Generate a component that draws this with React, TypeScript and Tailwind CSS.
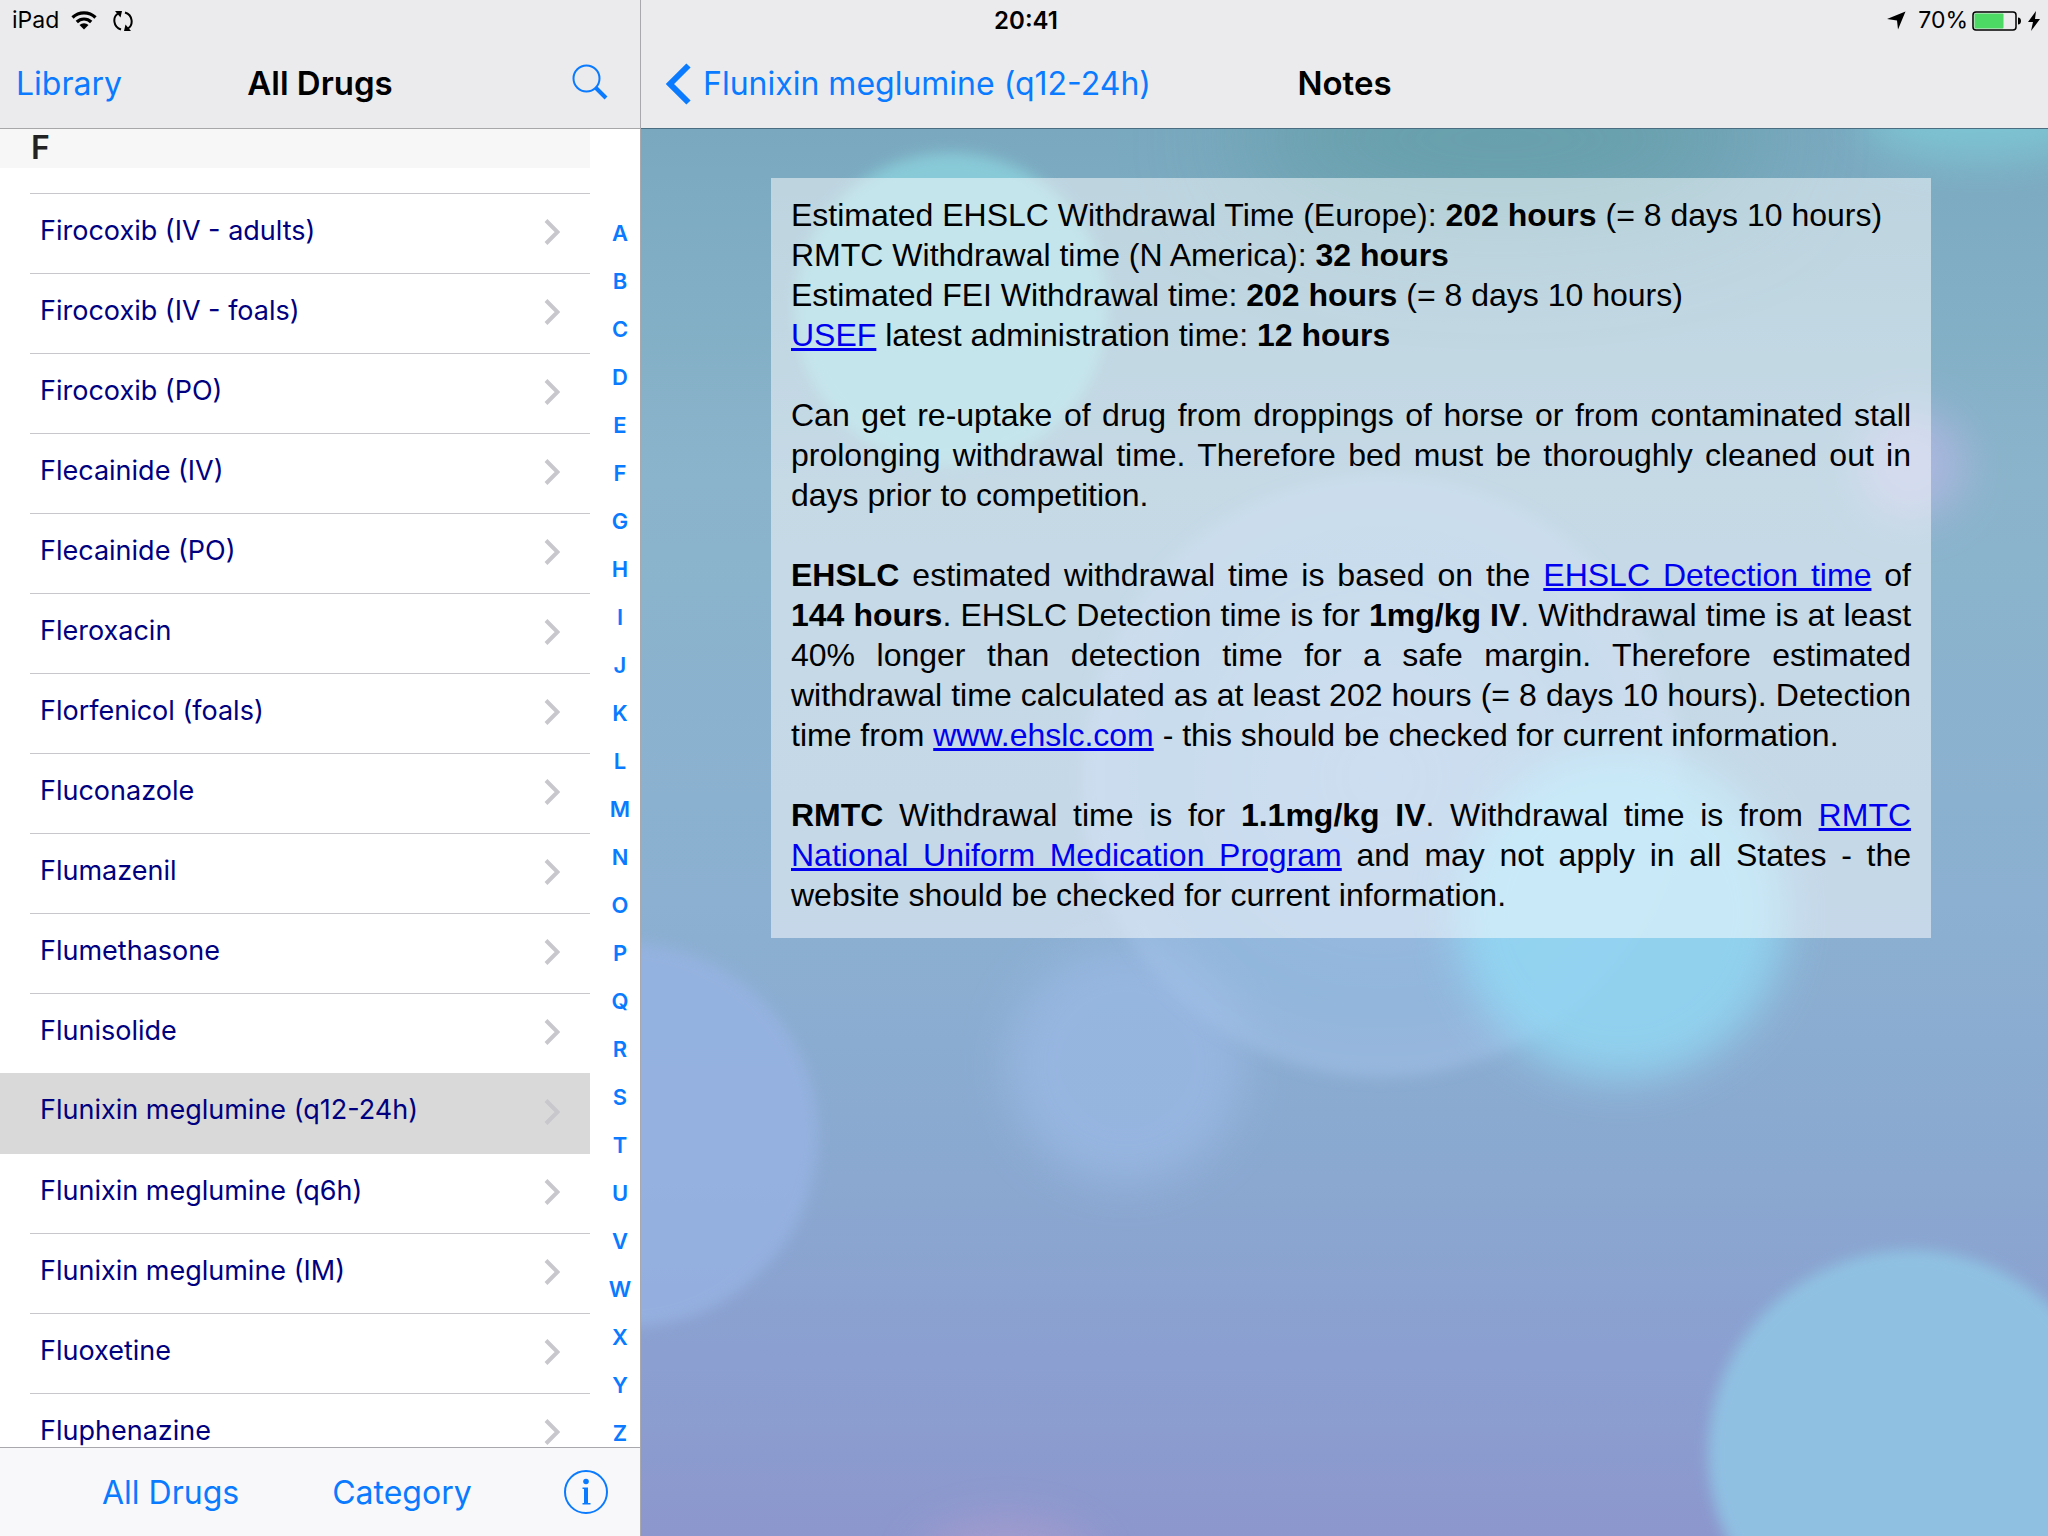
import React, { FC, ReactNode } from 'react';

const drugs = [
  'Firocoxib (IV - adults)',
  'Firocoxib (IV - foals)',
  'Firocoxib (PO)',
  'Flecainide (IV)',
  'Flecainide (PO)',
  'Fleroxacin',
  'Florfenicol (foals)',
  'Fluconazole',
  'Flumazenil',
  'Flumethasone',
  'Flunisolide',
  'Flunixin meglumine (q12-24h)',
  'Flunixin meglumine (q6h)',
  'Flunixin meglumine (IM)',
  'Fluoxetine',
  'Fluphenazine',
];

const selectedDrug = 'Flunixin meglumine (q12-24h)';
const letters = 'ABCDEFGHIJKLMNOPQRSTUVWXYZ'.split('');

const WifiIcon = () => (
  <svg width="26" height="20" viewBox="0 0 26 20" fill="none" stroke="#000" strokeWidth="3.200">
    <path d="M1.500 6.500a16.500 16.500 0 0 1 23 0" />
    <path d="M5.800 11a10.200 10.200 0 0 1 14.400 0" />
    <path d="M13 18.500l-4.500-4.500a6.500 6.500 0 0 1 9 0z" fill="#000" stroke="none" />
  </svg>
);

const SyncIcon = () => (
  <svg width="20" height="22" viewBox="0 0 20 22" fill="none" stroke="#000" strokeWidth="2">
    <path d="M8 19.500C0 17-.5 7 5 3.500" />
    <path d="M12 2.500C20 5 20.500 15 15 18.500" />
    <path d="M2 1h7l-1.500 6.500z" fill="#000" stroke="none" />
    <path d="M18 21h-7l1.500-6.500z" fill="#000" stroke="none" />
  </svg>
);

const Chevron = () => (
  <svg width="16" height="26" viewBox="0 0 16 26" fill="none" stroke="#c7c7cc" strokeWidth="4">
    <path d="M2 1.500l11.500 11.500L2 24.500" />
  </svg>
);

// Sits on top of both column headers
const StatusBar = () => (
  <div className="relative z-10 -mb-10 grid h-10 shrink-0 grid-cols-[1fr_auto_1fr] items-center pl-3 pr-2 pt-px text-[23px] text-black">
    <div className="flex items-center">
      <span>iPad</span>
      <span className="ml-3">
        <WifiIcon />
      </span>
      <span className="ml-4">
        <SyncIcon />
      </span>
    </div>
    <span className="text-2xl font-semibold">20:41</span>
    <div className="flex items-center justify-end">
      <svg width="19" height="19" viewBox="0 0 19 19">
        <path d="M18.500.500L11 18.500 10 9.500 0 8z" />
      </svg>
      <span className="ml-3">70%</span>
      <svg className="ml-1" width="50" height="20" viewBox="0 0 50 20">
        <rect x="1" y="1" width="43" height="18" rx="3" fill="none" stroke="#000" strokeWidth="1.500" />
        <rect x="2.500" y="2.500" width="29" height="15" rx="1" fill="#4cd964" />
        <path d="M46 6.500c4 0 4 7 0 7z" />
      </svg>
      <svg className="ml-1.5" width="12" height="20" viewBox="0 0 12 20">
        <path d="M8 0L0 11h5L3 20l9-12H7z" />
      </svg>
    </div>
  </div>
);

const DrugRow: FC<{ name: string; selected: boolean }> = ({ name, selected }) => (
  <li className={selected ? 'relative -mt-px bg-[#d9d9d9]' : 'relative'}>
    <button
      className={`flex w-full items-center justify-between pb-1 pl-10 pr-[30px] text-left text-[27px] text-[#00007f] ${
        selected ? 'h-[81px]' : 'h-20'
      }`}
    >
      <span className="pb-0.5">{name}</span>
      <Chevron />
    </button>
    {!selected && <div className="absolute bottom-0 left-[30px] right-0 h-px bg-[#c8c7cc]" />}
  </li>
);

const Sidebar = () => (
  <aside className="flex min-h-0 w-[641px] shrink-0 flex-col border-r border-[#a9a9ad] bg-white">
    <header className="grid h-[129px] shrink-0 grid-cols-[1fr_auto_1fr] items-center border-b border-[#a7a7aa] bg-[#ebebed] px-4 pt-10 text-[32px]">
      <button className="justify-self-start text-[#0a7aff]">Library</button>
      <h1 className="text-[33px] font-semibold">All Drugs</h1>
      <button className="mr-4 justify-self-end pb-1" aria-label="Search">
        <svg width="36" height="36" viewBox="0 0 36 36" fill="none" stroke="#0a7aff">
          <circle cx="14.500" cy="14.500" r="13" strokeWidth="2" />
          <path d="M24 24l10 10" strokeWidth="4" />
        </svg>
      </button>
    </header>

    <div className="flex min-h-0 flex-1 overflow-hidden">
      <div className="min-w-0 flex-1">
        <h2 className="h-[39px] bg-[#f7f7f7] pl-[31px] text-[32px] font-semibold leading-[38px] text-[#222]">
          F
        </h2>
        <div className="ml-[30px] h-[26px] border-b border-[#c8c7cc]" />
        <ul>
          {drugs.map((name) => (
            <DrugRow key={name} name={name} selected={name === selectedDrug} />
          ))}
        </ul>
      </div>
      <nav className="flex w-[50px] shrink-0 flex-col items-center pl-2.5 pt-20">
        {letters.map((letter) => (
          <a key={letter} href={`#${letter}`} className="h-12 text-[22px] font-semibold leading-[48px] text-[#0a7aff]">
            {letter}
          </a>
        ))}
      </nav>
    </div>

    <footer className="flex h-[89px] shrink-0 items-center border-t border-[#a9a9ad] bg-[#f8f8fa] pl-[102px] pr-8 text-[32px] text-[#0a7aff]">
      <button className="pt-0.5">All Drugs</button>
      <button className="ml-[93px] pt-0.5">Category</button>
      <button aria-label="Info" className="ml-auto">
        <svg width="44" height="44" viewBox="0 0 44 44" fill="#0a7aff">
          <circle cx="22" cy="22" r="21" fill="none" stroke="#0a7aff" strokeWidth="2" />
          <circle cx="22" cy="11.500" r="2.800" />
          <path d="M18.500 17.500H24V33h2.500v1.500h-8V33H20V19h-1.500z" />
        </svg>
      </button>
    </footer>
  </aside>
);

const Backdrop = () => (
  <svg
    className="absolute inset-0 size-full"
    viewBox="0 0 1407 1407"
    preserveAspectRatio="xMidYMid slice"
    aria-hidden="true"
  >
    <defs>
      <linearGradient id="base" x1="0" y1="0" x2="0" y2="1">
        <stop offset="0" stopColor="#7aa9bf" />
        <stop offset="0.250" stopColor="#8ab4cb" />
        <stop offset="0.550" stopColor="#8bb0d1" />
        <stop offset="0.750" stopColor="#8aa8d0" />
        <stop offset="0.880" stopColor="#8b9fd0" />
        <stop offset="1" stopColor="#8c97cd" />
      </linearGradient>
      <radialGradient id="bigBubble">
        <stop offset="0" stopColor="#a4c4ee" stopOpacity="0.600" />
        <stop offset="0.750" stopColor="#9abfe8" stopOpacity="0.500" />
        <stop offset="1" stopColor="#a6c4ec" stopOpacity="0.500" />
      </radialGradient>
      <filter id="soft" x="-50%" y="-50%" width="200%" height="200%">
        <feGaussianBlur stdDeviation="7" />
      </filter>
      <filter id="softer" x="-50%" y="-50%" width="200%" height="200%">
        <feGaussianBlur stdDeviation="22" />
      </filter>
      <filter id="haze" x="-50%" y="-150%" width="200%" height="400%">
        <feGaussianBlur stdDeviation="60" />
      </filter>
    </defs>
    <rect width="1407" height="1407" fill="url(#base)" />
    <ellipse cx="860" cy="10" rx="270" ry="80" fill="#5f9ba3" opacity="0.750" filter="url(#haze)" />
    <ellipse cx="1340" cy="-10" rx="120" ry="40" fill="#7fd0dc" opacity="0.700" filter="url(#softer)" />
    <circle cx="310" cy="180" r="156" fill="#8bd0dc" opacity="0.850" filter="url(#soft)" />
    <circle cx="1270" cy="335" r="55" fill="#b8b8e6" opacity="0.700" filter="url(#softer)" />
    <circle cx="-15" cy="1006" r="192" fill="#98b4e4" opacity="0.750" filter="url(#soft)" />
    <circle cx="485" cy="935" r="120" fill="#9bbae6" opacity="0.700" filter="url(#softer)" />
    <circle cx="740" cy="648" r="300" fill="url(#bigBubble)" filter="url(#soft)" />
    <circle cx="980" cy="785" r="165" fill="#93daf6" opacity="0.800" filter="url(#softer)" />
    <circle cx="1270" cy="1324" r="203" fill="#90c4e4" opacity="0.900" filter="url(#soft)" />
    <ellipse cx="365" cy="1435" rx="90" ry="45" fill="#a89ccf" opacity="0.800" filter="url(#softer)" />
  </svg>
);

const NoteLink: FC<{ children: ReactNode }> = ({ children }) => (
  <a href="#notes" className="text-[#0000ee] underline">
    {children}
  </a>
);

const Notes = () => (
  <main className="flex min-h-0 min-w-0 flex-1 flex-col">
    <header className="grid h-[129px] shrink-0 grid-cols-[1fr_auto_1fr] items-center border-b border-[#4a6d82] bg-[#ebebed] px-6 pt-10 text-[32px]">
      <button className="flex items-center gap-3 justify-self-start whitespace-nowrap text-[#0a7aff]">
        <svg width="26" height="42" viewBox="0 0 26 42" fill="none" stroke="#0a7aff" strokeWidth="6">
          <path d="M23.500 2.500L5 21l18.500 18.500" />
        </svg>
        Flunixin meglumine (q12-24h)
      </button>
      <h1 className="text-[33px] font-semibold">Notes</h1>
    </header>

    <div className="relative flex-1 overflow-hidden">
      <Backdrop />
      <div className="relative pl-[130px] pr-[117px] pt-[49px]">
        <article className="bg-white/50 px-5 pb-[23px] pt-[17px] font-['Liberation_Sans',sans-serif] text-[32px] leading-10 text-black">
          <p>
            Estimated EHSLC Withdrawal Time (Europe): <b>202 hours</b> (= 8 days 10 hours)
            <br />
            RMTC Withdrawal time (N America): <b>32 hours</b>
            <br />
            Estimated FEI Withdrawal time: <b>202 hours</b> (= 8 days 10 hours)
            <br />
            <NoteLink>USEF</NoteLink> latest administration time: <b>12 hours</b>
          </p>
          <p className="mt-10 text-justify">
            Can get re-uptake of drug from droppings of horse or from contaminated stall prolonging
            withdrawal time. Therefore bed must be thoroughly cleaned out in days prior to
            competition.
          </p>
          <p className="mt-10 text-justify">
            <b>EHSLC</b> estimated withdrawal time is based on the{' '}
            <NoteLink>EHSLC Detection time</NoteLink> of <b>144 hours</b>. EHSLC Detection time is
            for <b>1mg/kg IV</b>. Withdrawal time is at least 40% longer than detection time for a
            safe margin. Therefore estimated withdrawal time calculated as at least 202 hours (= 8
            days 10 hours). Detection time from <NoteLink>www.ehslc.com</NoteLink> - this should be
            checked for current information.
          </p>
          <p className="mt-10 text-justify">
            <b>RMTC</b> Withdrawal time is for <b>1.1mg/kg IV</b>. Withdrawal time is from{' '}
            <NoteLink>RMTC National Uniform Medication Program</NoteLink> and may not apply in all
            States - the website should be checked for current information.
          </p>
        </article>
      </div>
    </div>
  </main>
);

const App = () => {
  return (
    <div className="flex h-screen flex-col bg-[#ebebed] font-[Inter,sans-serif]">
      <StatusBar />
      <div className="flex min-h-0 flex-1">
        <Sidebar />
        <Notes />
      </div>
    </div>
  );
};

export default App;
